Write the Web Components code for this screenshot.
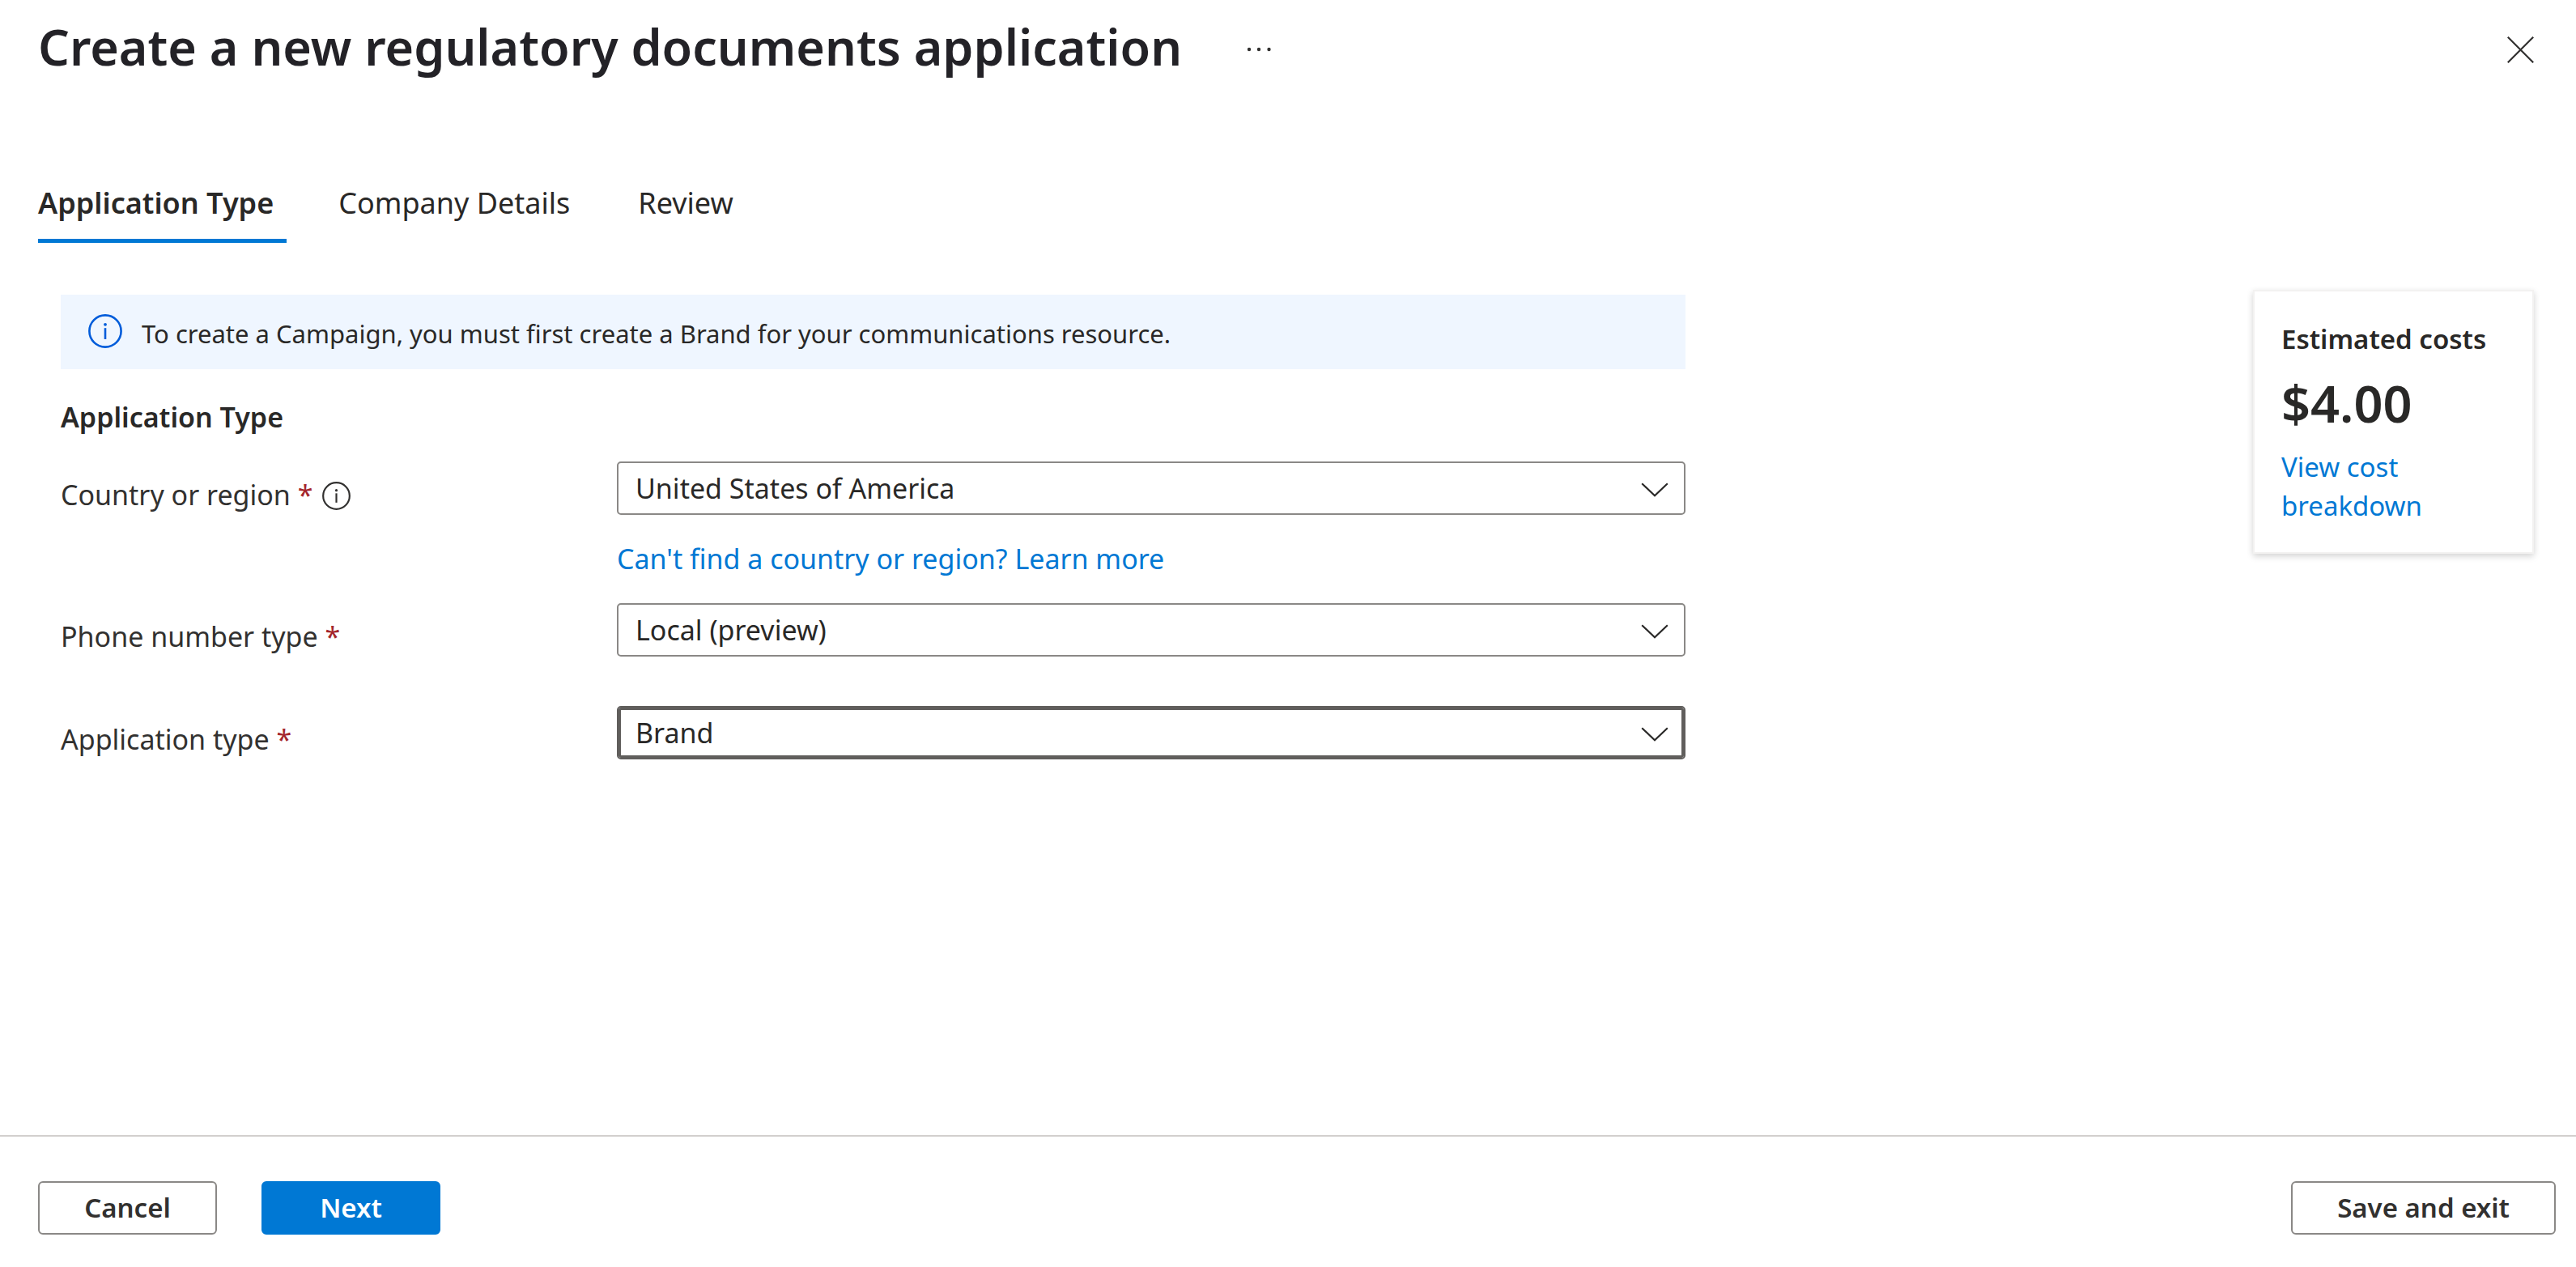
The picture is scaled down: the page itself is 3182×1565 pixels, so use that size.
<!DOCTYPE html>
<html lang="en">
<head>
<meta charset="utf-8">
<meta name="viewport" content="width=device-width, initial-scale=1">
<title>Create a new regulatory documents application</title>
<style>
  :root {
    --text: #292827;
    --label: #323130;
    --accent: #0078d4;
    --border: #8a8886;
  }
  body {
    margin: 0;
    background: #fff;
    color: var(--text);
    font: 400 34px/44px "Noto Sans", "Open Sans", sans-serif;
  }
</style>
</head>
<body>
<app-page>
  <page-header slot="header">Create a new regulatory documents application</page-header>
  <tab-list slot="tabs">
    <tab-item selected>Application Type</tab-item>
    <tab-item>Company Details</tab-item>
    <tab-item>Review</tab-item>
  </tab-list>
  <info-banner slot="form">To create a Campaign, you must first create a Brand for your communications resource.</info-banner>
  <form-section slot="form" heading="Application Type">
    <select-field label="Country or region" value="United States of America" info>
      <text-link slot="hint">Can't find a country or region? Learn more</text-link>
    </select-field>
    <select-field label="Phone number type" value="Local (preview)"></select-field>
    <select-field label="Application type" value="Brand" active></select-field>
  </form-section>
  <cost-card slot="aside" amount="$4.00">
    <span slot="title">Estimated costs</span>
    <text-link>View cost breakdown</text-link>
  </cost-card>
  <page-footer slot="footer">
    <action-button>Cancel</action-button>
    <action-button primary>Next</action-button>
    <action-button slot="end">Save and exit</action-button>
  </page-footer>
</app-page>

<script>
const define = (name, render, ready) => {
  customElements.define(name, class extends HTMLElement {
    connectedCallback() {
      if (this.shadowRoot) return;
      const root = this.attachShadow({ mode: "open" });
      const template = document.createElement("template");
      template.innerHTML = "<style>*{box-sizing:border-box}:host{display:block}</style>" + render(this);
      root.append(template.content.cloneNode(true));
      if (ready) ready(this, root);
    }
  });
};

define("info-icon", () => `
  <style>
    :host { flex: none; width: var(--icon-size, 35px); height: var(--icon-size, 35px); }
    svg { display: block; width: 100%; height: 100%; }
  </style>
  <svg viewBox="0 0 42 42" fill="none" stroke="currentColor" aria-hidden="true">
    <circle cx="21" cy="21" r="19.6" stroke-width="2.6"/>
    <path d="M21 17.2V31" stroke-width="2.6"/>
    <circle cx="21" cy="12.8" r="1.9" fill="currentColor" stroke="none"/>
  </svg>`);

define("text-link", () => `
  <style>
    a { color: var(--accent); text-decoration: none; }
  </style>
  <a href="#"><slot></slot></a>`);

define("page-header", () => `
  <style>
    :host { display: flex; align-items: center; padding: 16px 52px 0 47px; }
    h1 { margin: 0; font-size: 61px; line-height: 84px; font-weight: 600; color: #232227; }
    button { display: flex; padding: 6px 0 0; border: 0; background: none; color: var(--label); }
    .more { margin-left: 80px; }
    .close { margin-left: auto; }
  </style>
  <h1><slot></slot></h1>
  <button class="more" aria-label="More actions">
    <svg width="30" height="6" viewBox="0 0 30 6" fill="currentColor"><circle cx="3" cy="3" r="2.2"/><circle cx="15" cy="3" r="2.2"/><circle cx="27.5" cy="3" r="2.2"/></svg>
  </button>
  <button class="close" aria-label="Close">
    <svg width="33" height="33" viewBox="0 0 33 33" fill="none" stroke="currentColor" stroke-width="2.2"><path d="M.8.8l31.4 31.4M32.2.8L.8 32.2"/></svg>
  </button>`);

define("tab-list", () => `
  <style>
    :host { display: flex; gap: 64px; padding: 0 47px; }
  </style>
  <slot></slot>`, (host) => host.setAttribute("role", "tablist"));

define("tab-item", (host) => `
  <style>
    button {
      display: block; padding: 0 20px 20px 0; border: 0; border-bottom: 5px solid transparent;
      background: none; color: inherit; font: 400 36px/48px "Noto Sans", "Open Sans", sans-serif;
    }
    :host([selected]) button { padding-right: 16px; font-weight: 600; border-color: var(--accent); }
  </style>
  <button role="tab" aria-selected="${host.hasAttribute("selected")}"><slot></slot></button>`);

define("info-banner", () => `
  <style>
    :host {
      display: flex; align-items: flex-start; gap: 24px; padding: 24px 34px 20px;
      background: #eff6ff; font-size: 31px; line-height: 48px;
    }
    info-icon { --icon-size: 42px; color: #015cda; }
  </style>
  <info-icon></info-icon>
  <span><slot></slot></span>`);

define("form-section", (host) => `
  <style>
    :host { padding-top: 37px; }
    h2 { margin: 0 0 33px; font-size: 34px; line-height: 44px; font-weight: 600; }
    ::slotted(select-field:not(:last-child)) { margin-bottom: 61px; }
    ::slotted(select-field[info]) { margin-bottom: 33px !important; }
  </style>
  <h2>${host.getAttribute("heading")}</h2>
  <slot></slot>`);

define("select-field", (host) => `
  <style>
    :host { display: grid; grid-template-columns: 687px minmax(0, 1fr); align-items: start; }
    .label { display: flex; align-items: center; gap: 12px; padding-top: 19px; color: var(--label); }
    .label em { color: #a4262c; font-style: normal; }
    .label info-icon { margin-top: 2px; }
    .box { display: grid; align-items: center; }
    .box > * { grid-area: 1 / 1; }
    select {
      appearance: none; width: 100%; height: 66px; margin: 0; padding: 0 70px 0 21px;
      border: 2px solid var(--border); border-radius: 5px; background: #fff; color: var(--text);
      font: inherit;
    }
    :host([active]) select { border-color: #605e5c; box-shadow: inset 0 0 0 3px #605e5c; }
    svg { justify-self: end; margin: 4px 21px 0 0; pointer-events: none; color: var(--text); }
    ::slotted([slot="hint"]) { margin-top: 32px; }
  </style>
  <div class="label">
    <label for="control">${host.getAttribute("label")} <em>*</em></label>
    ${host.hasAttribute("info") ? "<info-icon></info-icon>" : ""}
  </div>
  <div>
    <div class="box">
      <select id="control" required><option>${host.getAttribute("value")}</option></select>
      <svg width="34" height="18" viewBox="0 0 34 18" fill="none" stroke="currentColor" stroke-width="2.2" aria-hidden="true"><path d="M1.2 1.2L17 16.2 32.8 1.2"/></svg>
    </div>
    <slot name="hint"></slot>
  </div>`);

define("cost-card", (host) => `
  <style>
    :host {
      display: flex; flex-direction: column; gap: 12px; padding: 35px 33px 33px;
      border: 2px solid #f3f2f1; background: #fff; font-size: 33px; line-height: 48px;
      box-shadow: 0 3px 8px rgba(0, 0, 0, .18);
    }
    .title { font-weight: 600; }
    .amount { font-size: 63px; line-height: 86px; font-weight: 600; }
  </style>
  <div class="title"><slot name="title"></slot></div>
  <div class="amount">${host.getAttribute("amount")}</div>
  <slot></slot>`);

define("action-button", () => `
  <style>
    button {
      display: block; min-width: 221px; height: 66px; padding: 0 55px;
      border: 2px solid var(--border); border-radius: 6px; background: #fff; color: var(--label);
      font: 600 33px/44px "Noto Sans", "Open Sans", sans-serif;
    }
    :host([primary]) button { background: var(--accent); border-color: var(--accent); color: #fff; }
  </style>
  <button type="button"><slot></slot></button>`);

define("page-footer", () => `
  <style>
    :host {
      display: flex; justify-content: space-between; padding: 55px 25px 40px 47px;
      border-top: 2px solid #d2d0ce;
    }
    .start { display: flex; gap: 55px; }
  </style>
  <div class="start"><slot></slot></div>
  <slot name="end"></slot>`);

define("app-page", () => `
  <style>
    :host { display: flex; flex-direction: column; min-height: 100vh; }
    .tabs { margin-top: 127px; }
    main { display: flex; flex: 1; align-items: flex-start; justify-content: space-between; gap: 64px; padding: 58px 52px 58px 75px; }
    .form { flex: 1; max-width: 2007px; padding-top: 6px; }
    aside { flex: 0 0 347px; }
  </style>
  <slot name="header"></slot>
  <div class="tabs"><slot name="tabs"></slot></div>
  <main>
    <div class="form"><slot name="form"></slot></div>
    <aside><slot name="aside"></slot></aside>
  </main>
  <slot name="footer"></slot>`);
</script>
</body>
</html>
